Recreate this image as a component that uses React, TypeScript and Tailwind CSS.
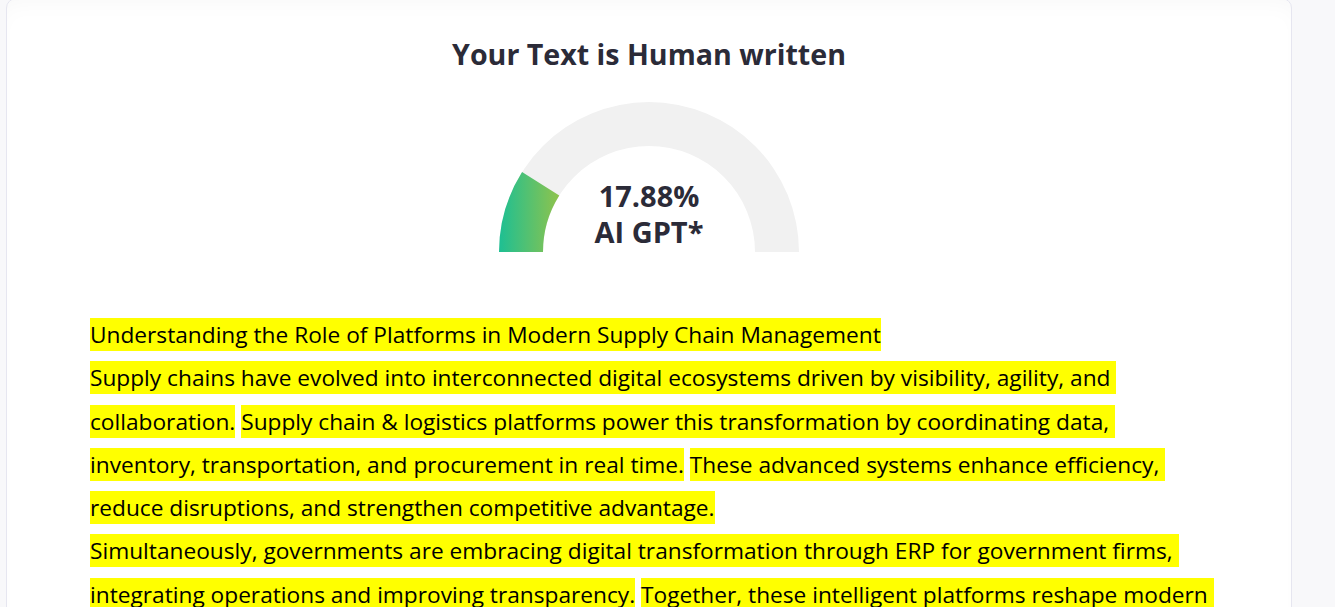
import React from "react";

const mark = "bg-[#ffff00] py-[1px]";

const Gauge: React.FC<{ value: number }> = ({ value }) => {
  const cx = 150;
  const cy = 151;
  const ro = 150;
  const ri = 106;
  const a = Math.PI - (value / 100) * Math.PI;
  const ox = cx + ro * Math.cos(a);
  const oy = cy - ro * Math.sin(a);
  const ix = cx + ri * Math.cos(a);
  const iy = cy - ri * Math.sin(a);

  return (
    <div className="relative w-[300px] h-[151px]">
      <svg width="300" height="151" viewBox="0 0 300 151">
        <defs>
          <linearGradient id="g" x1="0" y1="0" x2="1" y2="0">
            <stop offset="0%" stopColor="#1dbf93" />
            <stop offset="100%" stopColor="#8fc34c" />
          </linearGradient>
        </defs>
        <path
          d={`M0 ${cy} A${ro} ${ro} 0 0 1 300 ${cy} L${cx + ri} ${cy} A${ri} ${ri} 0 0 0 ${cx - ri} ${cy} Z`}
          fill="#f1f1f1"
        />
        <path
          d={`M0 ${cy} A${ro} ${ro} 0 0 1 ${ox} ${oy} L${ix} ${iy} A${ri} ${ri} 0 0 0 ${cx - ri} ${cy} Z`}
          fill="url(#g)"
        />
      </svg>
      {/* value label sits over the arc */}
      <div className="absolute inset-x-0 bottom-[2px] flex flex-col items-center text-[29px] font-bold leading-[36px] text-[#2b2b38]">
        <span>{value.toFixed(2)}%</span>
        <span>AI GPT*</span>
      </div>
    </div>
  );
};

export default function App() {
  return (
    <div
      className="h-[607px] bg-[#f8f8fa] pl-[6px] overflow-hidden"
      style={{ fontFamily: "'Open Sans', 'Noto Sans', sans-serif" }}
    >
      <div className="w-[1286px] h-[640px] -mt-[2px] bg-white border border-[#e6e6f0] rounded-[10px] shadow-[inset_0_14px_24px_-12px_rgba(0,0,0,0.035)] flex flex-col items-center">
        <h1 className="mt-[36px] text-[28.6px] leading-[38px] font-bold text-[#2b2b38]">
          Your Text is Human written
        </h1>

        <div className="mt-[28px]">
          <Gauge value={17.88} />
        </div>

        <div className="self-stretch mt-[61px] pl-[83px] pr-[76px] text-[22.7px] leading-[43.3px] text-black whitespace-pre-wrap">
          <span className={mark}>Understanding the Role of Platforms in Modern Supply Chain Management</span>
          {"\n"}
          <span className={mark}>
            Supply chains have evolved into interconnected digital ecosystems driven by visibility, agility, and collaboration.
          </span>{" "}
          <span className={mark}>
            Supply chain &amp; logistics platforms power this transformation by coordinating data, inventory, transportation, and procurement in real time.
          </span>{" "}
          <span className={mark}>
            These advanced systems enhance efficiency, reduce disruptions, and strengthen competitive advantage.
          </span>
          {"\n"}
          <span className={mark}>
            Simultaneously, governments are embracing digital transformation through ERP for government firms, integrating operations and improving transparency.
          </span>{" "}
          <span className={mark}>
            Together, these intelligent platforms reshape modern public and private sector operations.
          </span>
        </div>
      </div>
    </div>
  );
}
